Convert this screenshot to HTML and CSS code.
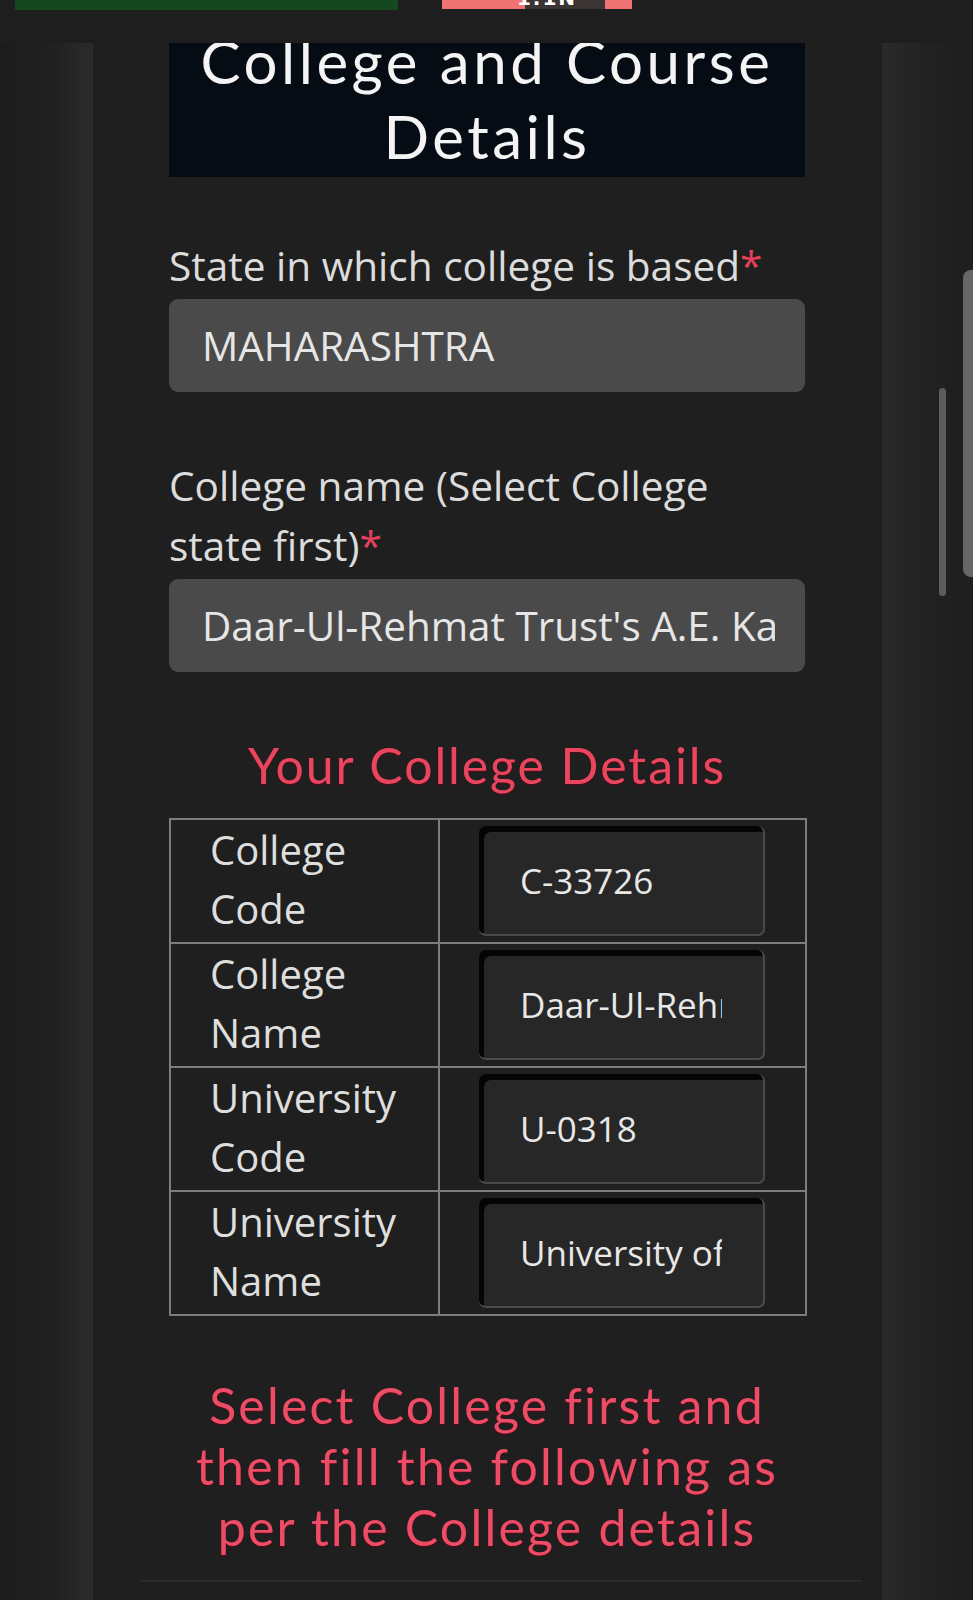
FILE: index.html
```html
<!DOCTYPE html>
<html lang="en">
<head>
<meta charset="utf-8">
<title>College and Course Details</title>
<link rel="stylesheet" href="styles.css">
</head>
<body>
<header class="topbar">
  <div class="topbar-green"></div>
  <div class="topbar-pill"><span class="pill-text">1.1N</span></div>
</header>
<div class="page">
  <div class="side side-left"></div>
  <main class="panel">
    <div class="title-box">
      <h1 class="title">College and Course Details</h1>
    </div>

    <div class="field">
      <label class="field-label">State in which college is based<span class="req">*</span></label>
      <div class="select"><span class="select-value">MAHARASHTRA</span></div>
    </div>

    <div class="field">
      <label class="field-label">College name (Select College state first)<span class="req">*</span></label>
      <div class="select"><span class="select-value">Daar-Ul-Rehmat Trust's A.E. Kalsekar Degree College</span></div>
    </div>

    <h2 class="section-title">Your College Details</h2>

    <table class="details">
      <colgroup>
        <col class="col-key">
        <col class="col-value">
      </colgroup>
      <tr>
        <th>College Code</th>
        <td><div class="readonly"><span class="readonly-value">C-33726</span></div></td>
      </tr>
      <tr>
        <th>College Name</th>
        <td><div class="readonly"><span class="readonly-value">Daar-Ul-Rehmat Trust's A.E. Kalsekar Degree College</span></div></td>
      </tr>
      <tr>
        <th>University Code</th>
        <td><div class="readonly"><span class="readonly-value">U-0318</span></div></td>
      </tr>
      <tr>
        <th>University Name</th>
        <td><div class="readonly"><span class="readonly-value">University of Mumbai</span></div></td>
      </tr>
    </table>

    <p class="notice">Select College first and then fill the following as per the College details</p>
    <hr class="divider">
  </main>
  <div class="side side-right"></div>
</div>
<div class="scroll-thumb-outer"></div>
<div class="scroll-thumb-inner"></div>
</body>
</html>
```
FILE: styles.css
```css
html, body {
  margin: 0;
  padding: 0;
}
body {
  background: #1e1e1e;
  width: 973px;
  height: 1600px;
  overflow: hidden;
  position: relative;
  font-family: "Open Sans", "Noto Sans", sans-serif;
  color: #e4e4e4;
}

.topbar {
  height: 43px;
  background: #1e1e1e;
  display: flex;
  align-items: flex-start;
}
.topbar-green {
  margin-left: 15px;
  width: 383px;
  height: 10px;
  background: #15481f;
}
.topbar-pill {
  margin-left: 44px;
  width: 190px;
  height: 9px;
  background: linear-gradient(90deg, #f07373 0, #f07373 83px, #3a3434 83px, #3a3434 163px, #f07373 163px);
  overflow: hidden;
  display: flex;
  justify-content: center;
}
.pill-text {
  font-family: "DejaVu Sans", sans-serif;
  font-weight: bold;
  font-size: 20px;
  line-height: 20px;
  margin-top: -12px;
  margin-left: 20px;
  color: #ffffff;
  letter-spacing: 2px;
}

.page {
  display: grid;
  grid-template-columns: 93px 789px 91px;
  height: 1557px;
}
.side-left {
  background: linear-gradient(90deg, #1c1c1c 0, #202020 50px, #2b2b2b 92px, #2b2b2b 93px);
}
.side-right {
  background: linear-gradient(90deg, #2a2a2a 0, #242424 30px, #1f1f1f 70px);
}
.panel {
  background: #1f1f1f;
  padding: 0 77px 0 76px;
  display: flex;
  flex-direction: column;
  overflow: hidden;
}
.panel > * {
  flex-shrink: 0;
}

.title-box {
  background: #050c14;
  height: 134px;
  overflow: hidden;
}
.title {
  margin: -19px -20px 0;
  font-family: Lato, "Open Sans", sans-serif;
  font-weight: 400;
  font-size: 60px;
  line-height: 75px;
  text-align: center;
  color: #f4f4f4;
  letter-spacing: 3.5px;
}

.field {
  display: flex;
  flex-direction: column;
  margin-top: 59px;
}
.field + .field {
  margin-top: 64px;
}
.field-label {
  font-size: 40.6px;
  line-height: 60px;
  color: #dcdcdc;
  margin-bottom: 3px;
}
.req {
  color: #e8405a;
}
.select {
  background: #4a4a4a;
  border-radius: 9px;
  height: 93px;
  padding: 0 30px 0 33px;
  display: flex;
  align-items: center;
  font-size: 40.4px;
  color: #e6e6e6;
}
.select-value {
  flex: 1;
  min-width: 0;
  white-space: nowrap;
  overflow: hidden;
}

.section-title {
  margin: 58px 0 18px;
  font-family: Lato, "Open Sans", sans-serif;
  font-weight: 400;
  font-size: 50px;
  line-height: 70px;
  text-align: center;
  color: #e8455f;
  letter-spacing: 1.9px;
  text-shadow: 0 1px 1px rgba(110, 0, 20, 0.7);
}

.details {
  width: 636px;
  table-layout: fixed;
  border-collapse: collapse;
  border: 2px solid #7d7d7d;
}
.col-key {
  width: 269px;
}
.col-value {
  width: 367px;
}
.details th,
.details td {
  border: 2px solid #7d7d7d;
  height: 122px;
  padding: 0;
  vertical-align: middle;
}
.details th {
  height: 118px;
  padding: 0 0 4px 39px;
  text-align: left;
  font-weight: 400;
  font-size: 40px;
  line-height: 59px;
  color: #dedede;
}
.details td {
  padding: 0 40px 0 39px;
}
.readonly {
  height: 110px;
  box-sizing: border-box;
  background: #272727;
  border-radius: 7px;
  border-right: 2px solid #4a4a4a;
  border-bottom: 2px solid #4a4a4a;
  box-shadow: inset 5px 6px 0 #050505;
  padding: 0 41px 0 41px;
  display: flex;
  align-items: center;
  font-size: 35px;
  color: #e8e8e8;
}
.readonly-value {
  flex: 1;
  min-width: 0;
  white-space: nowrap;
  overflow: hidden;
}

.notice {
  margin: 59px 0 0;
  font-family: Lato, "Open Sans", sans-serif;
  font-size: 50px;
  line-height: 61px;
  text-align: center;
  color: #ec4c66;
  letter-spacing: 2.2px;
  text-shadow: 0 1px 1px rgba(110, 0, 20, 0.7);
}
.divider {
  margin: 22px -57px 0 -28px;
  border: 0;
  height: 2px;
  background: #2a2a2a;
}

.scroll-thumb-outer {
  position: absolute;
  left: 963px;
  top: 270px;
  width: 12px;
  height: 307px;
  background: #676767;
  border-radius: 8px 0 0 8px;
}
.scroll-thumb-inner {
  position: absolute;
  left: 939px;
  top: 388px;
  width: 7px;
  height: 208px;
  background: #5c5c5c;
  border-radius: 4px;
}
```
